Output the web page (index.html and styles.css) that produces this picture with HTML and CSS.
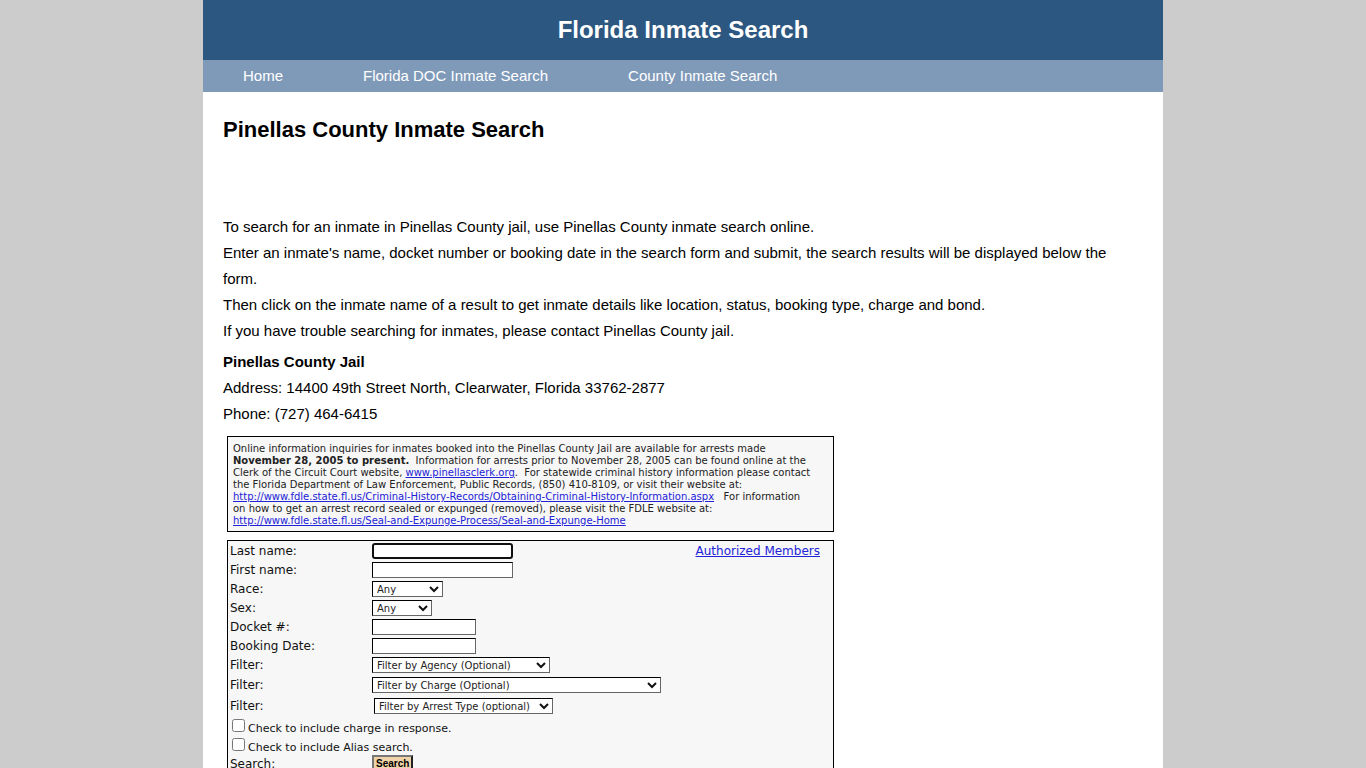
FILE: index.html
```html
<!DOCTYPE html>
<html lang="en">
<head>
<meta charset="utf-8">
<title>Pinellas County Inmate Search</title>
<link rel="stylesheet" href="styles.css">
</head>
<body>
<div class="page">
  <header class="banner">Florida Inmate Search</header>
  <nav class="menu">
    <a href="#">Home</a>
    <a href="#">Florida DOC Inmate Search</a>
    <a href="#">County Inmate Search</a>
  </nav>
  <main class="content">
    <h1>Pinellas County Inmate Search</h1>
    <div class="intro">
      <p>To search for an inmate in Pinellas County jail, use Pinellas County inmate search online.</p>
      <p>Enter an inmate's name, docket number or booking date in the search form and submit, the search results will be displayed below the form.</p>
      <p>Then click on the inmate name of a result to get inmate details like location, status, booking type, charge and bond.</p>
      <p>If you have trouble searching for inmates, please contact Pinellas County jail.</p>
    </div>
    <div class="contact">
      <p><strong>Pinellas County Jail</strong></p>
      <p>Address: 14400 49th Street North, Clearwater, Florida 33762-2877</p>
      <p>Phone: (727) 464-6415</p>
    </div>
    <div class="embed">
      <p class="notice">Online information inquiries for inmates booked into the Pinellas County Jail are available for arrests made<br><strong>November 28, 2005 to present.</strong>&nbsp; Information for arrests prior to November 28, 2005 can be found online at the<br>Clerk of the Circuit Court website, <a href="#">www.pinellasclerk.org</a>.&nbsp; For statewide criminal history information please contact<br>the Florida Department of Law Enforcement, Public Records, (850) 410-8109, or visit their website at:<br><a href="#">http://www.fdle.state.fl.us/Criminal-History-Records/Obtaining-Criminal-History-Information.aspx</a>&nbsp;&nbsp; For information<br>on how to get an arrest record sealed or expunged (removed), please visit the FDLE website at:<br><a href="#">http://www.fdle.state.fl.us/Seal-and-Expunge-Process/Seal-and-Expunge-Home</a></p>
      <form class="search">
        <div class="row">
          <label for="last">Last name:</label>
          <input class="field name focused" id="last" type="text">
          <a class="members" href="#">Authorized Members</a>
        </div>
        <div class="row">
          <label for="first">First name:</label>
          <input class="field name" id="first" type="text">
        </div>
        <div class="row">
          <label for="race">Race:</label>
          <span class="drop race"><select id="race"><option>Any</option></select><svg class="arrow" viewBox="0 0 10 7"><path d="M1 1l4 4 4-4"/></svg></span>
        </div>
        <div class="row">
          <label for="sex">Sex:</label>
          <span class="drop sex"><select id="sex"><option>Any</option></select><svg class="arrow" viewBox="0 0 10 7"><path d="M1 1l4 4 4-4"/></svg></span>
        </div>
        <div class="row">
          <label for="docket">Docket #:</label>
          <input class="field short" id="docket" type="text">
        </div>
        <div class="row">
          <label for="booking">Booking Date:</label>
          <input class="field short" id="booking" type="text">
        </div>
        <div class="row">
          <label for="agency">Filter:</label>
          <span class="drop agency"><select id="agency"><option>Filter by Agency (Optional)</option></select><svg class="arrow" viewBox="0 0 10 7"><path d="M1 1l4 4 4-4"/></svg></span>
        </div>
        <div class="row tall">
          <label for="charge">Filter:</label>
          <span class="drop charge"><select id="charge"><option>Filter by Charge (Optional)</option></select><svg class="arrow" viewBox="0 0 10 7"><path d="M1 1l4 4 4-4"/></svg></span>
        </div>
        <div class="row tall">
          <label for="arrest">Filter:</label>
          <span class="drop arrest"><select id="arrest"><option>Filter by Arrest Type (optional)</option></select><svg class="arrow" viewBox="0 0 10 7"><path d="M1 1l4 4 4-4"/></svg></span>
        </div>
        <div class="check">
          <input type="checkbox" id="inc-charge">
          <label for="inc-charge">Check to include charge in response.</label>
        </div>
        <div class="check">
          <input type="checkbox" id="inc-alias">
          <label for="inc-alias">Check to include Alias search.</label>
        </div>
        <div class="row">
          <label for="go">Search:</label>
          <button class="go" id="go" type="button">Search</button>
        </div>
      </form>
    </div>
  </main>
</div>
</body>
</html>
```
FILE: styles.css
```css
* {
  box-sizing: border-box;
}

body {
  margin: 0;
  background: #ccc;
  color: #000;
  font: 15px/26px "Liberation Sans", Arial, sans-serif;
}

p {
  margin: 0;
}

.page {
  max-width: 960px;
  min-height: 100vh;
  margin: 0 auto;
  background: #fff;
}

.banner {
  background: #2c5780;
  color: #fff;
  font-size: 24px;
  font-weight: bold;
  line-height: 60px;
  text-align: center;
}

.menu {
  display: flex;
  gap: 80px;
  padding: 0 40px;
  background: #7f9ab9;
  line-height: 32px;
}

.menu a {
  color: #fff;
  text-decoration: none;
}

.content {
  padding: 25px 20px;
}

h1 {
  margin: 0 0 71px;
  font-size: 22px;
  line-height: 26px;
}

.contact {
  margin-top: 5px;
}

.embed {
  display: flex;
  flex-direction: column;
  gap: 8px;
  max-width: 611px;
  margin-top: 9px;
  padding-left: 4px;
  font-family: Verdana, "DejaVu Sans", sans-serif;
}

.embed a {
  color: #2222d8;
}

.notice {
  padding: 6px 5px 4px;
  border: 1px solid #000;
  background: #f7f7f7;
  color: #222;
  font-size: 10px;
  line-height: 12px;
  white-space: nowrap;
}

.search {
  padding: 0 0 8px 2px;
  border: 1px solid #000;
  background: #f7f7f7;
  color: #111;
  font-size: 12px;
  line-height: 17px;
}

.row {
  display: grid;
  grid-template-columns: 142px 1fr auto;
  align-items: center;
  min-height: 19px;
  padding-right: 13px;
}

.row label,
.members {
  padding-top: 2px;
}

.tall {
  min-height: 21px;
}

.field,
.drop select {
  height: 16px;
  margin: 0;
  border: 1px solid #000;
  border-right-color: #666;
  border-bottom-color: #666;
  border-radius: 0;
  background: #fff;
  color: #222;
  font: 10px/14px Verdana, "DejaVu Sans", sans-serif;
}

.field {
  padding: 0 2px;
}

.name {
  width: 141px;
}

.short {
  width: 104px;
}

.focused {
  border: 2px solid #101010;
  border-radius: 3px;
}

.drop {
  display: flex;
  position: relative;
}

.drop select {
  width: 100%;
  padding: 1px 4px 0;
  appearance: none;
}

.race {
  width: 71px;
}

.sex {
  width: 60px;
}

.agency {
  width: 178px;
}

.charge {
  width: 289px;
}

.arrest {
  width: 179px;
  margin-left: 2px;
}

.arrow {
  position: absolute;
  top: 5px;
  right: 4px;
  width: 10px;
  height: 7px;
  fill: none;
  stroke: #111;
  stroke-width: 2;
  pointer-events: none;
}

.check {
  display: flex;
  align-items: center;
  gap: 3px;
  height: 19px;
  padding-left: 2px;
  font-size: 11px;
}

.check input {
  width: 13px;
  height: 13px;
  margin: 0;
}

.check label {
  padding-top: 6px;
}

.go {
  justify-self: start;
  height: 17px;
  padding: 0 2px;
  border: 2px solid;
  border-color: #777 #222 #222 #777;
  background: #f0d3a8;
  color: #000;
  font: bold 10px/13px "Liberation Sans", Arial, sans-serif;
}
```
